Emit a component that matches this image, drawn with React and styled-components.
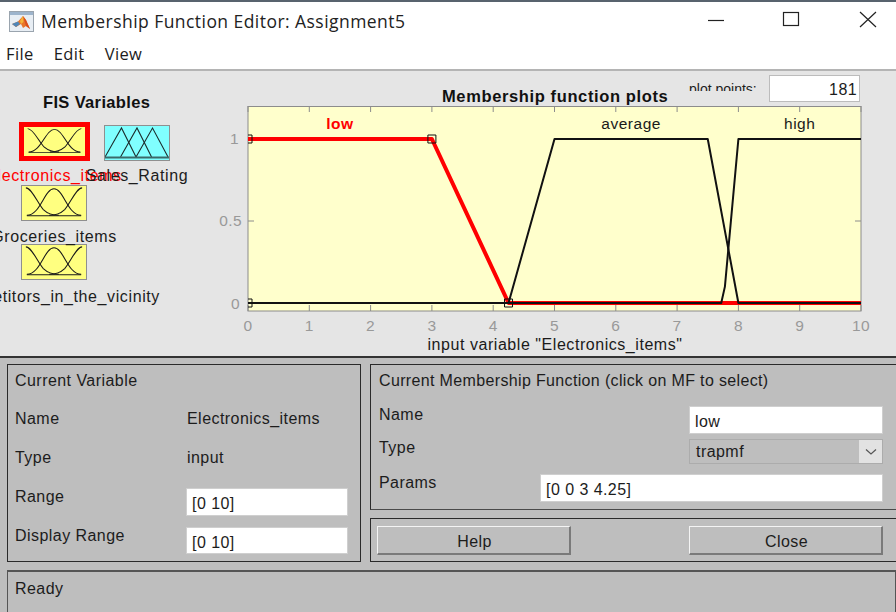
import React from "react";
import styled, { createGlobalStyle } from "styled-components";

const GlobalStyle = createGlobalStyle`
  html, body {
    margin: 0;
    padding: 0;
    background: #bebebe;
  }
`;

const FONT = `"Liberation Sans", Arial, sans-serif`;
const TITLE_FONT = `"Open Sans", "Noto Sans", sans-serif`;

const Window = styled.div`
  width: 896px;
  height: 612px;
  overflow: hidden;
  display: flex;
  flex-direction: column;
  font-family: ${FONT};
  font-size: 16px;
  letter-spacing: 0.45px;
  color: #1c1c1c;
`;

/* title bar + menu */
const TitleBar = styled.div`
  height: 38px;
  flex: none;
  display: flex;
  align-items: center;
  background: #fff;
  border-top: 2px solid #58636e;
  padding-left: 9px;
`;

const TitleText = styled.div`
  font-family: ${TITLE_FONT};
  font-size: 17.5px;
  letter-spacing: 0.45px;
  margin-left: 7px;
  color: #222;
  flex: 1;
`;

const WinButtons = styled.div`
  display: flex;
  align-items: center;
  margin-top: -2px;
`;

const WinButton = styled.svg`
  width: 18px;
  height: 18px;
  margin-left: ${p => p.$gap}px;
  margin-right: ${p => p.$end || 0}px;
  fill: none;
  stroke: #222;
  stroke-width: 1.2;
`;

const MenuBar = styled.div`
  height: 29px;
  flex: none;
  display: flex;
  gap: 20px;
  align-items: center;
  padding: 0 0 2px 6px;
  box-sizing: border-box;
  background: #fff;
  font-family: ${TITLE_FONT};
  font-size: 16.5px;
  letter-spacing: 0.4px;
`;

/* upper half */
const Upper = styled.div`
  height: 289px;
  box-sizing: border-box;
  flex: none;
  display: flex;
  background: #e5e5e5;
  border-top: 2px solid #b4b4b4;
  border-bottom: 2px solid #333;
  overflow: hidden;
`;

const FisColumn = styled.div`
  width: 210px;
  flex: none;
  position: relative;
`;

const FisTitle = styled.div`
  font-weight: bold;
  font-size: 16.5px;
  letter-spacing: 0.35px;
  margin: 22px 0 11px 43px;
  line-height: 18px;
  color: #111;
  white-space: nowrap;
`;

const FisRow = styled.div`
  display: flex;
  height: ${p => p.$h}px;
`;

const FisCell = styled.div`
  width: ${p => p.$w}px;
  margin-left: ${p => p.$left}px;
  display: flex;
  flex-direction: column;
  align-items: center;
`;

const FisIcon = styled.div`
  box-sizing: border-box;
  width: ${p => (p.$active ? 71 : 66)}px;
  height: ${p => (p.$active ? 39 : 36)}px;
  margin-top: ${p => p.$top || 0}px;
  background: ${p => p.$bg};
  border: ${p => (p.$active ? "5px solid #ff0000" : "1px solid #8f8f8f")};
  line-height: 0;
  svg {
    width: 100%;
    height: 100%;
  }
`;

const FisLabel = styled.div`
  width: 0;
  display: flex;
  justify-content: center;
  white-space: nowrap;
  line-height: 18px;
  margin-top: ${p => p.$top}px;
  color: ${p => p.$color || "#1c1c1c"};
  position: relative;
  font-size: 16px;
  letter-spacing: 0.6px;
`;

const PlotColumn = styled.div`
  flex: 1;
  display: flex;
  flex-direction: column;
`;

const PlotHeader = styled.div`
  height: 35px;
  flex: none;
  display: flex;
  padding-left: 232px;
`;

const PlotTitle = styled.div`
  font-weight: bold;
  font-size: 16.5px;
  letter-spacing: 0.62px;
  line-height: 18px;
  width: 247px;
  margin-top: 16px;
  white-space: nowrap;
  color: #111;
`;

const PointsLabel = styled.div`
  font-size: 14px;
  letter-spacing: 0;
  width: 80px;
  height: 9px;
  margin-top: 11px;
  line-height: 14px;
  overflow: hidden;
  white-space: nowrap;
`;

const PointsInput = styled.input`
  box-sizing: border-box;
  width: 91px;
  height: 27px;
  margin-top: 4px;
  padding: 2px 2px 0 0;
  border: 1px solid #bcbcbc;
  background: #fff;
  text-align: right;
  font: inherit;
  letter-spacing: 0.4px;
  color: #1c1c1c;
  outline: none;
`;

const PlotSvg = styled.svg`
  display: block;
  width: 686px;
  height: 250px;
  font-family: ${FONT};
`;

/* lower half */
const Lower = styled.div`
  flex: 1;
  display: grid;
  grid-template-columns: 354px 1fr;
  grid-template-rows: 146px 44px 1fr;
  column-gap: 9px;
  row-gap: 8px;
  padding: 6px 0 0 7px;
  background: #bebebe;
`;

const Panel = styled.div`
  box-sizing: border-box;
  border: 1px solid #2a2a2a;
  ${p => p.$tall && "grid-row: span 2;"}
`;

const VariablePanel = styled(Panel)`
  padding: 7px 5px 0 7px;
  display: flex;
  flex-direction: column;
`;

const MfPanel = styled(Panel)`
  padding: 7px 13px 0 8px;
  border-right: none;
  border-bottom-color: #4a4a4a;
  display: flex;
  flex-direction: column;
`;

const PanelTitle = styled.div`
  line-height: 18px;
  white-space: nowrap;
`;

const MfTitle = styled(PanelTitle)`
  letter-spacing: 0.35px;
`;

const VarRow = styled.div`
  display: grid;
  grid-template-columns: 171px 162px;
  flex: none;
  height: ${p => p.$h}px;
  align-items: ${p => (p.$field ? "start" : "center")};
`;

const VarLabel = styled.div`
  line-height: 18px;
`;

const VarValue = styled.div`
  line-height: 18px;
  padding-left: 1px;
`;

const Field = styled.input`
  box-sizing: border-box;
  width: ${p => p.$w}px;
  height: ${p => p.$h || 28}px;
  border: 1px solid #cfcfcf;
  background: #fff;
  padding: 4px 0 0 5px;
  font: inherit;
  letter-spacing: 0.45px;
  color: #1c1c1c;
  outline: none;
`;

const MfRow = styled.div`
  display: flex;
  justify-content: space-between;
  align-items: flex-start;
  margin-top: ${p => p.$top}px;
`;

const MfLabel = styled.div`
  line-height: 18px;
`;

const Select = styled.div`
  box-sizing: border-box;
  width: 194px;
  height: 25px;
  display: flex;
  align-items: center;
  justify-content: space-between;
  border: 1px solid #acacac;
  padding-left: 6px;
  background: #bebebe;
`;

const SelectArrow = styled.div`
  width: 23px;
  height: 23px;
  background: #e2e2e2;
  display: flex;
  align-items: center;
  justify-content: center;
`;

const ButtonPanel = styled(Panel)`
  display: flex;
  justify-content: space-between;
  align-items: center;
  padding: 0 13px 0 6px;
  border-right: none;
`;

const PushButton = styled.button`
  box-sizing: border-box;
  width: 194px;
  height: 29px;
  background: #bebebe;
  border: 1px solid;
  border-width: 1px 2px 2px 1px;
  border-color: #f4f4f4 #7a7a7a #7a7a7a #f4f4f4;
  font: inherit;
  letter-spacing: 0.45px;
  color: #1c1c1c;
  padding: 4px 0 0 2px;
`;

const StatusPanel = styled.div`
  grid-column: 1 / 3;
  box-sizing: border-box;
  border: 2px solid #555;
  border-width: 2px 1px 0 1px;
  padding: 8px 7px;
  line-height: 18px;
`;

const MatlabIcon = () => (
  <svg width="25" height="21" viewBox="0 0 25 21">
    <rect x="0.5" y="0.5" width="24" height="20" fill="#e8eef4" stroke="#9aa4ae" />
    <rect x="1" y="1" width="23" height="3" fill="#9db4cc" />
    <path d="M3 13 L9 10.5 L14 5 L17 9 L21 18 L17 15 L14 17 L12 13 L7 16 Z" fill="#e8762a" />
    <path d="M3 13 L9 10.5 L11 13 L7 16 Z" fill="#4f86b8" />
    <path d="M14 5 L17 9 L21 18 L17 15 Z" fill="#d94f1e" />
    <path d="M11 10 L14 5 L14.5 11 L12 13 Z" fill="#f4b43a" />
  </svg>
);

// three bell curves, as on the yellow input/output tiles
const GaussGlyph = () => (
  <svg viewBox="0 0 66 36" preserveAspectRatio="none">
    <g fill="none" stroke="#1a1a1a" strokeWidth="1.1">
      <path d="M4 2 C10 2 16 18 22 25 C26 29 32 31 38 31" />
      <path d="M5 31 C19 31 23 3 33 3 C43 3 47 31 61 31" />
      <path d="M62 2 C56 2 50 18 44 25 C40 29 34 31 28 31" />
      <path d="M5 31.5 H61" />
    </g>
  </svg>
);

const TriangleGlyph = () => (
  <svg viewBox="0 0 66 34" preserveAspectRatio="none">
    <g fill="none" stroke="#1a2a2a" strokeWidth="1.1">
      <path d="M0 31 L17 2 L32 31" />
      <path d="M16 31 L33 2 L48 31" />
      <path d="M32 31 L49 2 L65 31" />
      <path d="M0 31.5 H66" strokeWidth="2" stroke="#3a6a6a" />
    </g>
  </svg>
);

const X0 = 38;
const UNIT = 61.3;
const px = v => X0 + UNIT * v;
const py = m => 197 - 164 * m;
const line = pts => pts.map(([x, m]) => `${px(x)},${py(m)}`).join(" ");

const MF_LABELS = [
  { text: "low", at: 1.5, color: "#ff0000", weight: "bold" },
  { text: "average", at: 6.25, color: "#1a1a1a" },
  { text: "high", at: 9, color: "#1a1a1a" },
];

const MembershipPlot = () => {
  const xs = [0, 1, 2, 3, 4, 5, 6, 7, 8, 9, 10];
  const grey = "#8c8c8c";
  return (
    <PlotSvg viewBox="0 0 686 250">
      <defs>
        <clipPath id="axes">
          <rect x={X0} y="0" width={UNIT * 10} height="205" />
        </clipPath>
      </defs>
      <rect x={X0} y="0.5" width={UNIT * 10} height="204.5" fill="#ffffcc" stroke={grey} />
      {xs.map(v => (
        <g key={v} stroke={grey}>
          <line x1={px(v)} x2={px(v)} y1="0" y2="6" />
          <line x1={px(v)} x2={px(v)} y1="199" y2="205" />
        </g>
      ))}
      {[1, 0.5, 0].map(m => (
        <g key={m} stroke={grey}>
          <line x1={X0} x2={X0 + 6} y1={py(m)} y2={py(m)} />
          <line x1={px(10) - 6} x2={px(10)} y1={py(m)} y2={py(m)} />
        </g>
      ))}
      <g clipPath="url(#axes)" fill="none" strokeLinejoin="round">
        <polyline points={line([[0, 1], [3, 1], [4.25, 0], [10, 0]])} stroke="#ff0000" strokeWidth="4" />
        <polyline points={line([[0, 0], [4.25, 0], [5, 1], [7.5, 1], [8, 0], [10, 0]])} stroke="#111" strokeWidth="2" />
        <polyline points={line([[0, 0], [7.72, 0], [7.78, 0.1], [8, 1], [10, 1]])} stroke="#111" strokeWidth="2" />
        {[[0, 1], [3, 1], [0, 0], [4.25, 0]].map(([x, m]) => (
          <rect key={`${x}-${m}`} x={px(x) - 4} y={py(m) - 4} width="8" height="8" stroke="#111" strokeWidth="1" />
        ))}
      </g>
      {MF_LABELS.map(l => (
        <text key={l.text} x={px(l.at)} y="23" textAnchor="middle" fontSize="15.5" letterSpacing="0.5" fontWeight={l.weight} fill={l.color}>
          {l.text}
        </text>
      ))}
      {xs.map(v => (
        <text key={v} x={px(v)} y="225" textAnchor="middle" fontSize="15.5" letterSpacing="0.4" fill="#999">
          {v}
        </text>
      ))}
      <text x="29" y="38" textAnchor="end" fontSize="15.5" fill="#999">1</text>
      <text x="32" y="120" textAnchor="end" fontSize="15.5" letterSpacing="0.4" fill="#999">0.5</text>
      <text x="30" y="203" textAnchor="end" fontSize="15.5" fill="#999">0</text>
      <text x="345" y="244" textAnchor="middle" fontSize="16" letterSpacing="0.55" fill="#1a1a1a">
        input variable "Electronics_items"
      </text>
    </PlotSvg>
  );
};

export default function App() {
  return (
    <Window>
      <GlobalStyle />
      <TitleBar>
        <MatlabIcon />
        <TitleText>Membership Function Editor: Assignment5</TitleText>
        <WinButtons>
          <WinButton viewBox="0 0 18 18" $gap={0}>
            <path d="M1 9.5 H17" />
          </WinButton>
          <WinButton viewBox="0 0 18 18" $gap={57}>
            <rect x="1.5" y="1.5" width="15" height="13" />
          </WinButton>
          <WinButton viewBox="0 0 18 18" $gap={59} $end={19}>
            <path d="M1 1 L17 16 M17 1 L1 16" />
          </WinButton>
        </WinButtons>
      </TitleBar>
      <MenuBar>
        <span>File</span>
        <span>Edit</span>
        <span>View</span>
      </MenuBar>

      <Upper>
        <FisColumn>
          <FisTitle>FIS Variables</FisTitle>
          <FisRow $h={63}>
            <FisCell $w={72} $left={18}>
              <FisIcon $active $bg="#ffff80">
                <GaussGlyph />
              </FisIcon>
              <FisLabel $top={6} $color="#ff0000">Electronics_items</FisLabel>
            </FisCell>
            <FisCell $w={66} $left={14}>
              <FisIcon $bg="#80ffff" $top={3}>
                <TriangleGlyph />
              </FisIcon>
              <FisLabel $top={6}>Sales_Rating</FisLabel>
            </FisCell>
          </FisRow>
          <FisRow $h={59}>
            <FisCell $w={66} $left={21}>
              <FisIcon $bg="#ffff80">
                <GaussGlyph />
              </FisIcon>
              <FisLabel $top={7}>Groceries_items</FisLabel>
            </FisCell>
          </FisRow>
          <FisRow $h={60}>
            <FisCell $w={66} $left={21}>
              <FisIcon $bg="#ffff80">
                <GaussGlyph />
              </FisIcon>
              <FisLabel $top={8}>Competitors_in_the_vicinity</FisLabel>
            </FisCell>
          </FisRow>
        </FisColumn>
        <PlotColumn>
          <PlotHeader>
            <PlotTitle>Membership function plots</PlotTitle>
            <PointsLabel>plot points:</PointsLabel>
            <PointsInput readOnly value="181" />
          </PlotHeader>
          <MembershipPlot />
        </PlotColumn>
      </Upper>

      <Lower>
        <VariablePanel $tall>
          <PanelTitle>Current Variable</PanelTitle>
          <VarRow $h={10} />
          <VarRow $h={38.5}>
            <VarLabel>Name</VarLabel>
            <VarValue>Electronics_items</VarValue>
          </VarRow>
          <VarRow $h={38.5}>
            <VarLabel>Type</VarLabel>
            <VarValue>input</VarValue>
          </VarRow>
          <VarRow $h={11} />
          <VarRow $field $h={39}>
            <VarLabel>Range</VarLabel>
            <Field readOnly value="[0 10]" $w={162} />
          </VarRow>
          <VarRow $field $h={28}>
            <VarLabel>Display Range</VarLabel>
            <Field readOnly value="[0 10]" $w={162} $h={27} />
          </VarRow>
        </VariablePanel>
        <MfPanel>
          <MfTitle>Current Membership Function (click on MF to select)</MfTitle>
          <MfRow $top={16}>
            <MfLabel>Name</MfLabel>
            <Field readOnly value="low" $w={194} />
          </MfRow>
          <MfRow $top={5}>
            <MfLabel>Type</MfLabel>
            <Select>
              trapmf
              <SelectArrow>
                <svg width="12" height="8" viewBox="0 0 12 8" fill="none" stroke="#555" strokeWidth="1.2">
                  <path d="M1 1.5 L6 6 L11 1.5" />
                </svg>
              </SelectArrow>
            </Select>
          </MfRow>
          <MfRow $top={10}>
            <MfLabel>Params</MfLabel>
            <Field readOnly value="[0 0 3 4.25]" $w={343} />
          </MfRow>
        </MfPanel>
        <ButtonPanel>
          <PushButton>Help</PushButton>
          <PushButton>Close</PushButton>
        </ButtonPanel>
        <StatusPanel>Ready</StatusPanel>
      </Lower>
    </Window>
  );
}
